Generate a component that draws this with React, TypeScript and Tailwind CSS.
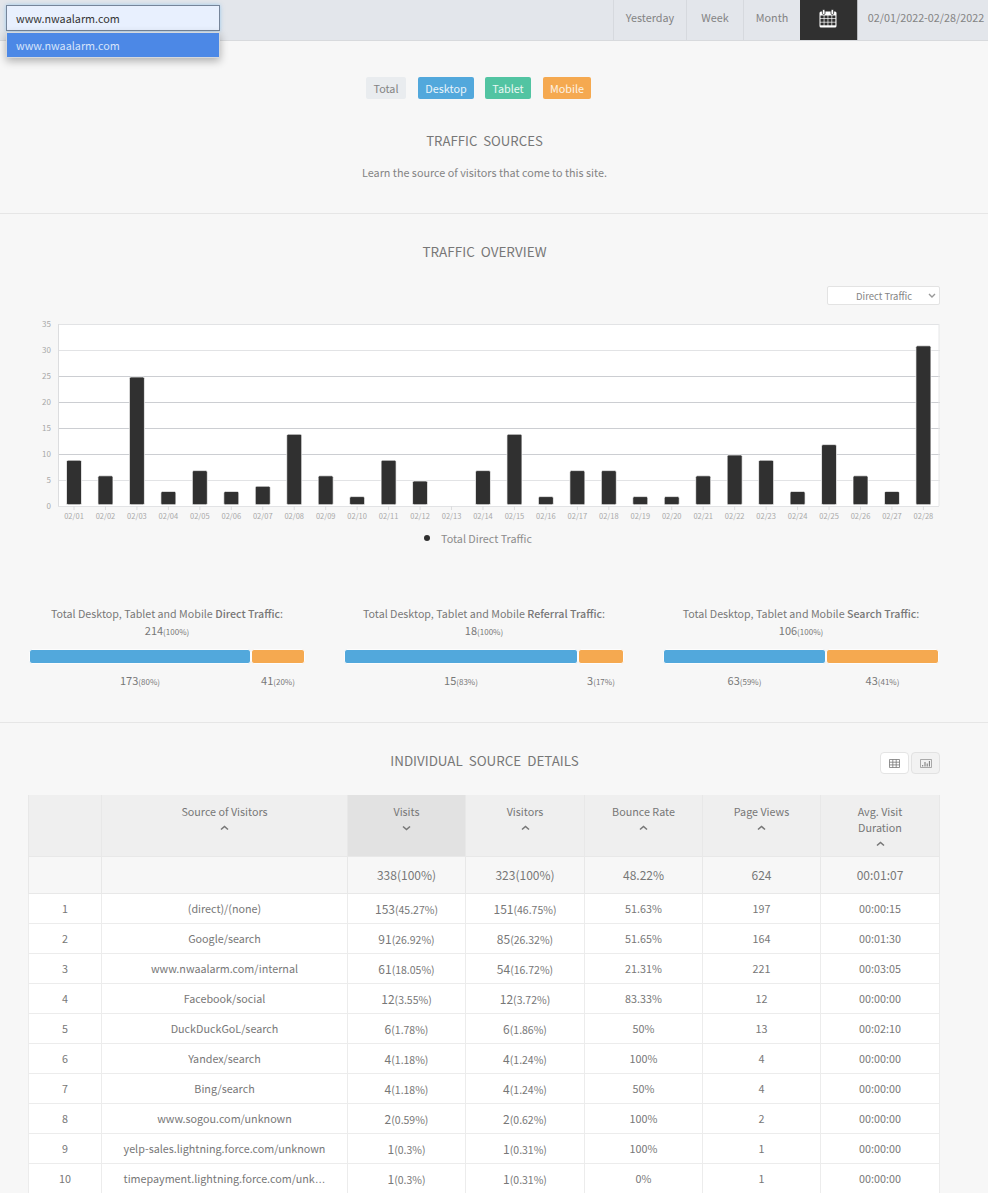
const FONT = "font-['Noto_Sans_CJK_SC','Source_Sans_Pro','Noto_Sans',sans-serif]";

const values = [9, 6, 25, 3, 7, 3, 4, 14, 6, 2, 9, 5, 0, 7, 14, 2, 7, 7, 2, 2, 6, 10, 9, 3, 12, 6, 3, 31];

const rows: [string, string, string, string, string, string, string, string, string][] = [
  ["1", "(direct)/(none)", "153", "(45.27%)", "151", "(46.75%)", "51.63%", "197", "00:00:15"],
  ["2", "Google/search", "91", "(26.92%)", "85", "(26.32%)", "51.65%", "164", "00:01:30"],
  ["3", "www.nwaalarm.com/internal", "61", "(18.05%)", "54", "(16.72%)", "21.31%", "221", "00:03:05"],
  ["4", "Facebook/social", "12", "(3.55%)", "12", "(3.72%)", "83.33%", "12", "00:00:00"],
  ["5", "DuckDuckGoL/search", "6", "(1.78%)", "6", "(1.86%)", "50%", "13", "00:02:10"],
  ["6", "Yandex/search", "4", "(1.18%)", "4", "(1.24%)", "100%", "4", "00:00:00"],
  ["7", "Bing/search", "4", "(1.18%)", "4", "(1.24%)", "50%", "4", "00:00:00"],
  ["8", "www.sogou.com/unknown", "2", "(0.59%)", "2", "(0.62%)", "100%", "2", "00:00:00"],
  ["9", "yelp-sales.lightning.force.com/unknown", "1", "(0.3%)", "1", "(0.31%)", "100%", "1", "00:00:00"],
  ["10", "timepayment.lightning.force.com/unk", "1", "(0.3%)", "1", "(0.31%)", "0%", "1", "00:00:00"],
];

function Chevron({ down = false }: { down?: boolean }) {
  return (
    <svg width="9" height="6" viewBox="0 0 9 6" className="mx-auto mt-[5px] block">
      <path d={down ? "M1 1.5 L4.5 4.5 L8 1.5" : "M1 4.5 L4.5 1.5 L8 4.5"} fill="none" stroke="#777" strokeWidth="1.6" />
    </svg>
  );
}

function Calendar() {
  return (
    <svg width="18" height="19" viewBox="0 0 18 19" className="mb-[3px] mr-[2px]">
      <rect x="0.5" y="2.5" width="17" height="16" rx="1.5" fill="#fff" />
      <rect x="3.4" y="0.5" width="2.6" height="5" rx="1.2" fill="#fff" stroke="#303030" strokeWidth="0.8" />
      <rect x="12" y="0.5" width="2.6" height="5" rx="1.2" fill="#fff" stroke="#303030" strokeWidth="0.8" />
      {[1.5, 5.4, 9.3, 13.2].map((x) =>
        [6.5, 10, 13.5].map((y) => <rect key={`${x}-${y}`} x={x} y={y} width="3.2" height="2.8" fill="#303030" />)
      )}
    </svg>
  );
}

function Chart() {
  const x0 = 58;
  const y0 = 506;
  const unit = 5.2;
  const step = 31.46;
  const first = 74;
  return (
    <svg width="988" height="205" viewBox="0 318 988 205" className="block">
      <rect x={x0} y={324.5} width={881} height={181.5} fill="#fff" />
      {[0, 5, 10, 15, 20, 25, 30, 35].map((v) => {
        const y = Math.round(y0 - v * unit) + 0.5;
        const strong = v >= 10 && v <= 25;
        return (
          <g key={v}>
            <line x1={x0} x2={v === 0 || v === 35 ? 939 : 940} y1={y} y2={y} stroke={strong ? "#ccced2" : "#e2e3e5"} strokeWidth="1" />
            <text x={51} y={y + 2.5} textAnchor="end" fontSize="8" fill="#a8a8a8" fontFamily="'Noto Sans CJK SC',sans-serif">
              {v}
            </text>
          </g>
        );
      })}
      <line x1={x0 + 0.5} x2={x0 + 0.5} y1={324} y2={506} stroke="#dcdddf" />
      <line x1={939} x2={939} y1={324} y2={506} stroke="#e6e7e8" />
      {values.map((v, i) => {
        const cx = first + i * step;
        const day = String(i + 1).padStart(2, "0");
        return (
          <g key={i}>
            <line x1={cx} x2={cx} y1={506} y2={510} stroke="#dcdddf" />
            {v > 0 && (
              <rect x={cx - 7.5} y={y0 - v * unit + 1} width={15} height={v * unit - 2.3} rx={1.5} fill="#303030" stroke="#fff" strokeOpacity="0.7" strokeWidth="1" />
            )}
            <text x={cx} y={519} textAnchor="middle" fontSize="7.5" fill="#a8a8a8" fontFamily="'Noto Sans CJK SC',sans-serif">
              02/{day}
            </text>
          </g>
        );
      })}
    </svg>
  );
}

function Segment({ w, color, n, p }: { w: string; color: string; n: string; p: string }) {
  return (
    <div className={w}>
      <div className={`h-[15px] rounded-[3px] border border-[#fdfdfd] ${color}`} />
      <div className="mt-[7px] text-center text-[#777] text-[11px] leading-[18px]">
        {n}
        <span className="text-[8px]">{p}</span>
      </div>
    </div>
  );
}

function Stat({ w, label, total, a, b }: { w: string; label: string; total: string; a: [string, string, string]; b: [string, string, string] }) {
  return (
    <div className={w}>
      <div className="text-center text-[10.7px] leading-[16px] text-[#777] whitespace-nowrap">
        Total Desktop, Tablet and Mobile <b className="font-medium">{label}</b>:
      </div>
      <div className="text-center text-[11px] leading-[16px] text-[#777]">
        {total}
        <span className="text-[8px]">(100%)</span>
      </div>
      <div className="mt-[9px] flex">
        <Segment w={a[0]} color="bg-[#52a8dc]" n={a[1]} p={a[2]} />
        <Segment w={b[0]} color="bg-[#f5a950]" n={b[1]} p={b[2]} />
      </div>
    </div>
  );
}

function Th({ children, active = false }: { children?: React.ReactNode; active?: boolean }) {
  return (
    <th className={`h-[62px] align-top pt-[9px] px-2 border-r border-b border-[#e8e8e8] first:border-l font-normal text-[10.75px] leading-[16px] text-[#777] ${active ? "bg-[#e2e2e2]" : "bg-[#efefef]"}`}>
      {children}
    </th>
  );
}

function TotalCell({ children }: { children?: React.ReactNode }) {
  return (
    <td className="h-[37px] pb-px border-r border-b border-[#e8e8e8] first:border-l bg-[#f7f7f7] text-center text-[12px] text-[#777]">{children}</td>
  );
}

function Td({ children, className = "px-2" }: { children?: React.ReactNode; className?: string }) {
  return (
    <td className={`h-[30px] pt-[2px] border-r border-b border-[#ececec] first:border-l bg-white text-center text-[10.75px] text-[#777] ${className}`}>{children}</td>
  );
}

export default function App() {
  return (
    <div className={`relative h-[1193px] w-[988px] overflow-hidden bg-[#f7f7f7] ${FONT}`}>
      <header className="flex h-[41px] items-stretch justify-end border-b border-[#d8dadd] bg-[#e3e6eb] text-[10.8px] text-[#848484]">
        <div className="flex w-[73px] items-center justify-center border-l border-[#d6d9de] pb-[6px]">Yesterday</div>
        <div className="flex w-[57px] items-center justify-center border-l border-[#d6d9de] pb-[6px]">Week</div>
        <div className="flex w-[57px] items-center justify-center border-l border-[#d6d9de] pb-[6px]">Month</div>
        <div className="flex w-[57px] items-center justify-center bg-[#303030]">
          <Calendar />
        </div>
        <div className="flex w-[131px] items-center justify-center whitespace-nowrap border-l border-[#b9bbbf] pl-[6px] pb-[6px]">02/01/2022-02/28/2022</div>
      </header>

      <div className="absolute left-[6px] top-[5px] z-10 w-[214px]">
        <div className="flex h-[26px] items-center border border-[#76859a] bg-[#e8f0fe] pl-[9px] text-[10.8px] text-[#333] shadow-[0_0_4px_rgba(82,168,236,0.5)]">
          www.nwaalarm.com
        </div>
        <div className="mt-px flex h-[26px] items-center border border-[#d5d8dc] bg-[#4c88e6] pl-[9px] text-[10.8px] text-[#d7e4fa] shadow-[0_3px_8px_rgba(0,0,0,0.3)]">
          www.nwaalarm.com
        </div>
      </div>

      <section className="h-[173px] border-b border-[#e6e6e6]">
        <div className="flex justify-center pt-[36px] pr-[31px] text-[10.8px]">
          <div className="flex h-[22px] w-[40px] items-center justify-center rounded-[2px] bg-[#e9ecef] text-[#848484]">Total</div>
          <div className="ml-[12px] flex h-[22px] w-[56px] items-center justify-center rounded-[2px] bg-[#52a8dc] text-[#e9f4fb]">Desktop</div>
          <div className="ml-[11px] flex h-[22px] w-[46px] items-center justify-center rounded-[2px] bg-[#52c4a2] text-[#e9f8f3]">Tablet</div>
          <div className="ml-[12px] flex h-[22px] w-[48px] items-center justify-center rounded-[2px] bg-[#f5a950] text-[#fdf3e5]">Mobile</div>
        </div>
        <h2 className="mt-[32px] pr-[19px] text-center text-[13.2px] font-normal leading-[20px] text-[#777] whitespace-pre">TRAFFIC  SOURCES</h2>
        <p className="mt-[13px] pr-[19px] text-center text-[10.8px] leading-[16px] text-[#848484]">Learn the source of visitors that come to this site.</p>
      </section>

      <section className="h-[509px] border-b border-[#e6e6e6]">
        <h2 className="pt-[27px] pr-[19px] text-center text-[13.5px] font-normal leading-[20px] text-[#777] whitespace-pre">TRAFFIC  OVERVIEW</h2>
        <div className="mt-[25px] flex justify-end pr-[48px]">
          <div className="relative flex h-[19px] w-[113px] items-center rounded-[2px] border border-[#e3e3e3] bg-white pl-[28px] pt-[2px] text-[9.5px] text-[#848484]">
            Direct Traffic
            <svg width="8" height="5" viewBox="0 0 8 5" className="absolute right-[3px] top-[6px]">
              <path d="M1 1 L4 4 L7 1" fill="none" stroke="#999" strokeWidth="1.4" />
            </svg>
          </div>
        </div>
        <div className="mt-[13px]">
          <Chart />
        </div>
        <div className="mt-[7px] flex items-center justify-center gap-[11px] pr-[32px] text-[10.8px] text-[#8c8c8c]">
          <span className="h-[6px] w-[6px] rounded-full bg-[#303030]" />
          Total Direct Traffic
        </div>

        <div className="mt-[60px] flex pl-[29px]">
          <Stat w="w-[276px]" label="Direct Traffic" total="214" a={["w-[222px]", "173", "(80%)"]} b={["w-[54px]", "41", "(20%)"]} />
          <Stat w="ml-[39px] w-[280px]" label="Referral Traffic" total="18" a={["w-[234px]", "15", "(83%)"]} b={["w-[46px]", "3", "(17%)"]} />
          <Stat w="ml-[39px] w-[276px]" label="Search Traffic" total="106" a={["w-[163px]", "63", "(59%)"]} b={["w-[113px]", "43", "(41%)"]} />
        </div>
      </section>

      <section className="relative">
        <h2 className="pt-[27px] pr-[19px] text-center text-[13.4px] font-normal leading-[20px] text-[#777] whitespace-pre">INDIVIDUAL  SOURCE  DETAILS</h2>
        <div className="absolute right-[48px] top-[29px] flex gap-[2px]">
          <button className="flex h-[22px] w-[29px] items-center justify-center rounded-[4px] border border-[#e4e4e4] bg-white">
            <svg width="11" height="9" viewBox="0 0 11 9">
              <path d="M0.5 0.5H10.5V8.5H0.5Z M0.5 3.2H10.5 M0.5 5.9H10.5 M3.8 0.5V8.5 M7.2 0.5V8.5" fill="none" stroke="#777" strokeWidth="0.8" />
            </svg>
          </button>
          <button className="flex h-[22px] w-[29px] items-center justify-center rounded-[4px] border border-[#e2e2e2] bg-[#f2f2f2]">
            <svg width="12" height="9" viewBox="0 0 12 9">
              <path d="M0.5 0.5H11.5V8.5H0.5Z" fill="none" stroke="#8a8a8a" strokeWidth="0.7" />
              <path d="M2.7 7.5V6 M5 7.5V3 M7.2 7.5V4.5 M9.4 7.5V2" fill="none" stroke="#777" strokeWidth="1" />
            </svg>
          </button>
        </div>
        <div className="pl-[28px] pt-[25px]">
          <table className="w-[912px] table-fixed border-separate border-spacing-0">
            <colgroup>
              <col className="w-[74px]" />
              <col className="w-[246px]" />
              <col className="w-[118px]" />
              <col className="w-[119px]" />
              <col className="w-[118px]" />
              <col className="w-[118px]" />
              <col className="w-[119px]" />
            </colgroup>
            <thead>
              <tr>
                <Th />
                <Th>Source of Visitors<Chevron /></Th>
                <Th active>Visits<Chevron down /></Th>
                <Th>Visitors<Chevron /></Th>
                <Th>Bounce Rate<Chevron /></Th>
                <Th>Page Views<Chevron /></Th>
                <Th>Avg. Visit<br />Duration<Chevron /></Th>
              </tr>
            </thead>
            <tbody>
              <tr>
                <TotalCell />
                <TotalCell />
                <TotalCell>338(100%)</TotalCell>
                <TotalCell>323(100%)</TotalCell>
                <TotalCell>48.22%</TotalCell>
                <TotalCell>624</TotalCell>
                <TotalCell>00:01:07</TotalCell>
              </tr>
              {rows.map((r) => (
                <tr key={r[0]} className="first:h-[32px]">
                  <Td>{r[0]}</Td>
                  <Td className="truncate px-[20px]">
                    {r[1]}
                    {r[0] === "10" && <span className="font-['Liberation_Sans',sans-serif]">…</span>}
                  </Td>
                  <Td><span className="text-[12px]">{r[2]}</span><span className="text-[10.5px]">{r[3]}</span></Td>
                  <Td><span className="text-[12px]">{r[4]}</span><span className="text-[10.5px]">{r[5]}</span></Td>
                  <Td>{r[6]}</Td>
                  <Td>{r[7]}</Td>
                  <Td>{r[8]}</Td>
                </tr>
              ))}
            </tbody>
          </table>
        </div>
      </section>
    </div>
  );
}
